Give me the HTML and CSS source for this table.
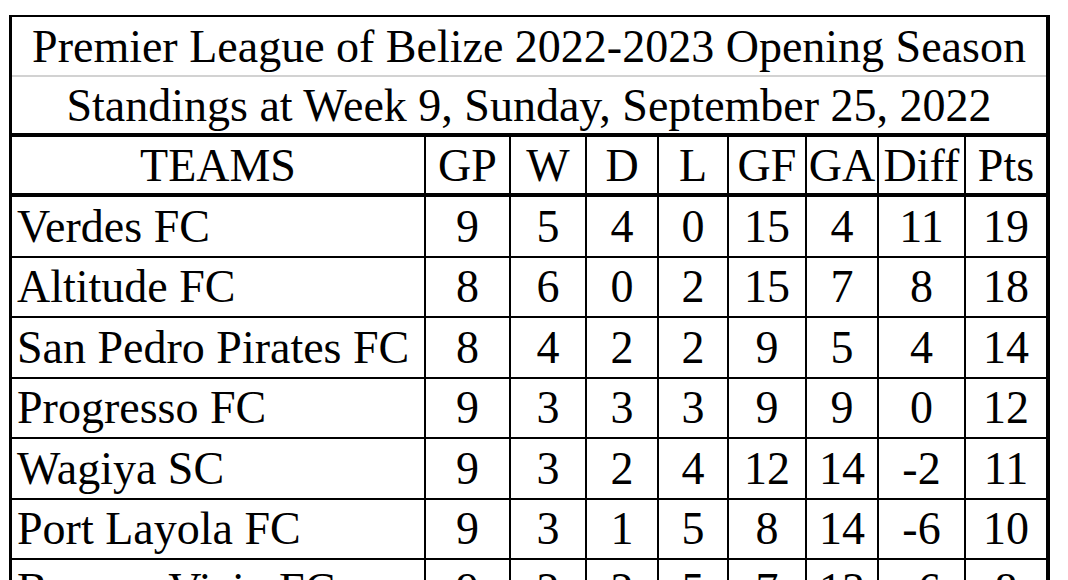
FILE: index.html
```html
<!DOCTYPE html>
<html lang="en">
<head>
<meta charset="utf-8">
<title>Premier League of Belize Standings</title>
<link rel="stylesheet" href="styles.css">
</head>
<body>
<div class="sheet">
  <div class="title">Premier League of Belize 2022-2023 Opening Season</div>
  <div class="subtitle">Standings at Week 9, Sunday, September 25, 2022</div>
  <div class="grid head">
    <div class="cell">TEAMS</div>
    <div class="cell">GP</div>
    <div class="cell">W</div>
    <div class="cell">D</div>
    <div class="cell">L</div>
    <div class="cell">GF</div>
    <div class="cell">GA</div>
    <div class="cell">Diff</div>
    <div class="cell">Pts</div>
  </div>
  <div class="grid body">
    <div class="cell team">Verdes FC</div><div class="cell">9</div><div class="cell">5</div><div class="cell">4</div><div class="cell">0</div><div class="cell">15</div><div class="cell">4</div><div class="cell">11</div><div class="cell">19</div>
    <div class="cell team">Altitude FC</div><div class="cell">8</div><div class="cell">6</div><div class="cell">0</div><div class="cell">2</div><div class="cell">15</div><div class="cell">7</div><div class="cell">8</div><div class="cell">18</div>
    <div class="cell team">San Pedro Pirates FC</div><div class="cell">8</div><div class="cell">4</div><div class="cell">2</div><div class="cell">2</div><div class="cell">9</div><div class="cell">5</div><div class="cell">4</div><div class="cell">14</div>
    <div class="cell team">Progresso FC</div><div class="cell">9</div><div class="cell">3</div><div class="cell">3</div><div class="cell">3</div><div class="cell">9</div><div class="cell">9</div><div class="cell">0</div><div class="cell">12</div>
    <div class="cell team">Wagiya SC</div><div class="cell">9</div><div class="cell">3</div><div class="cell">2</div><div class="cell">4</div><div class="cell">12</div><div class="cell">14</div><div class="cell">-2</div><div class="cell">11</div>
    <div class="cell team">Port Layola FC</div><div class="cell">9</div><div class="cell">3</div><div class="cell">1</div><div class="cell">5</div><div class="cell">8</div><div class="cell">14</div><div class="cell">-6</div><div class="cell">10</div>
    <div class="cell team">Benque Viejo FC</div><div class="cell">9</div><div class="cell">2</div><div class="cell">2</div><div class="cell">5</div><div class="cell">7</div><div class="cell">13</div><div class="cell">-6</div><div class="cell">8</div>
  </div>
</div>
</body>
</html>
```
FILE: styles.css
```css
html, body {
  margin: 0;
  padding: 0;
  overflow: hidden;
  background: #fff;
}
body {
  font-family: "Liberation Serif", "Times New Roman", serif;
  color: #000;
}
.sheet {
  margin: 15px 0 0 9px;
  width: 1041px;
  box-sizing: border-box;
  background: #000;
  padding: 2px 4px 0 3px;
}
.title,
.subtitle {
  background: #fff;
  display: flex;
  align-items: center;
  justify-content: center;
  font-size: 46px;
  white-space: nowrap;
}
.title {
  height: 58px;
  border-bottom: 2px solid #d2d2d2;
}
.subtitle {
  height: 56px;
}
.grid {
  display: grid;
  grid-template-columns: 412px 83px 74px 70px 68px 76px 70px 85px 80px;
  gap: 2px;
  margin-top: 4px;
}
.cell {
  background: #fff;
  display: flex;
  align-items: center;
  justify-content: center;
  font-size: 46px;
  white-space: nowrap;
  overflow: hidden;
}
.head .cell {
  height: 56px;
}
.body .cell {
  height: 58.5px;
}
.cell.team {
  justify-content: flex-start;
  padding-left: 5px;
}
```
